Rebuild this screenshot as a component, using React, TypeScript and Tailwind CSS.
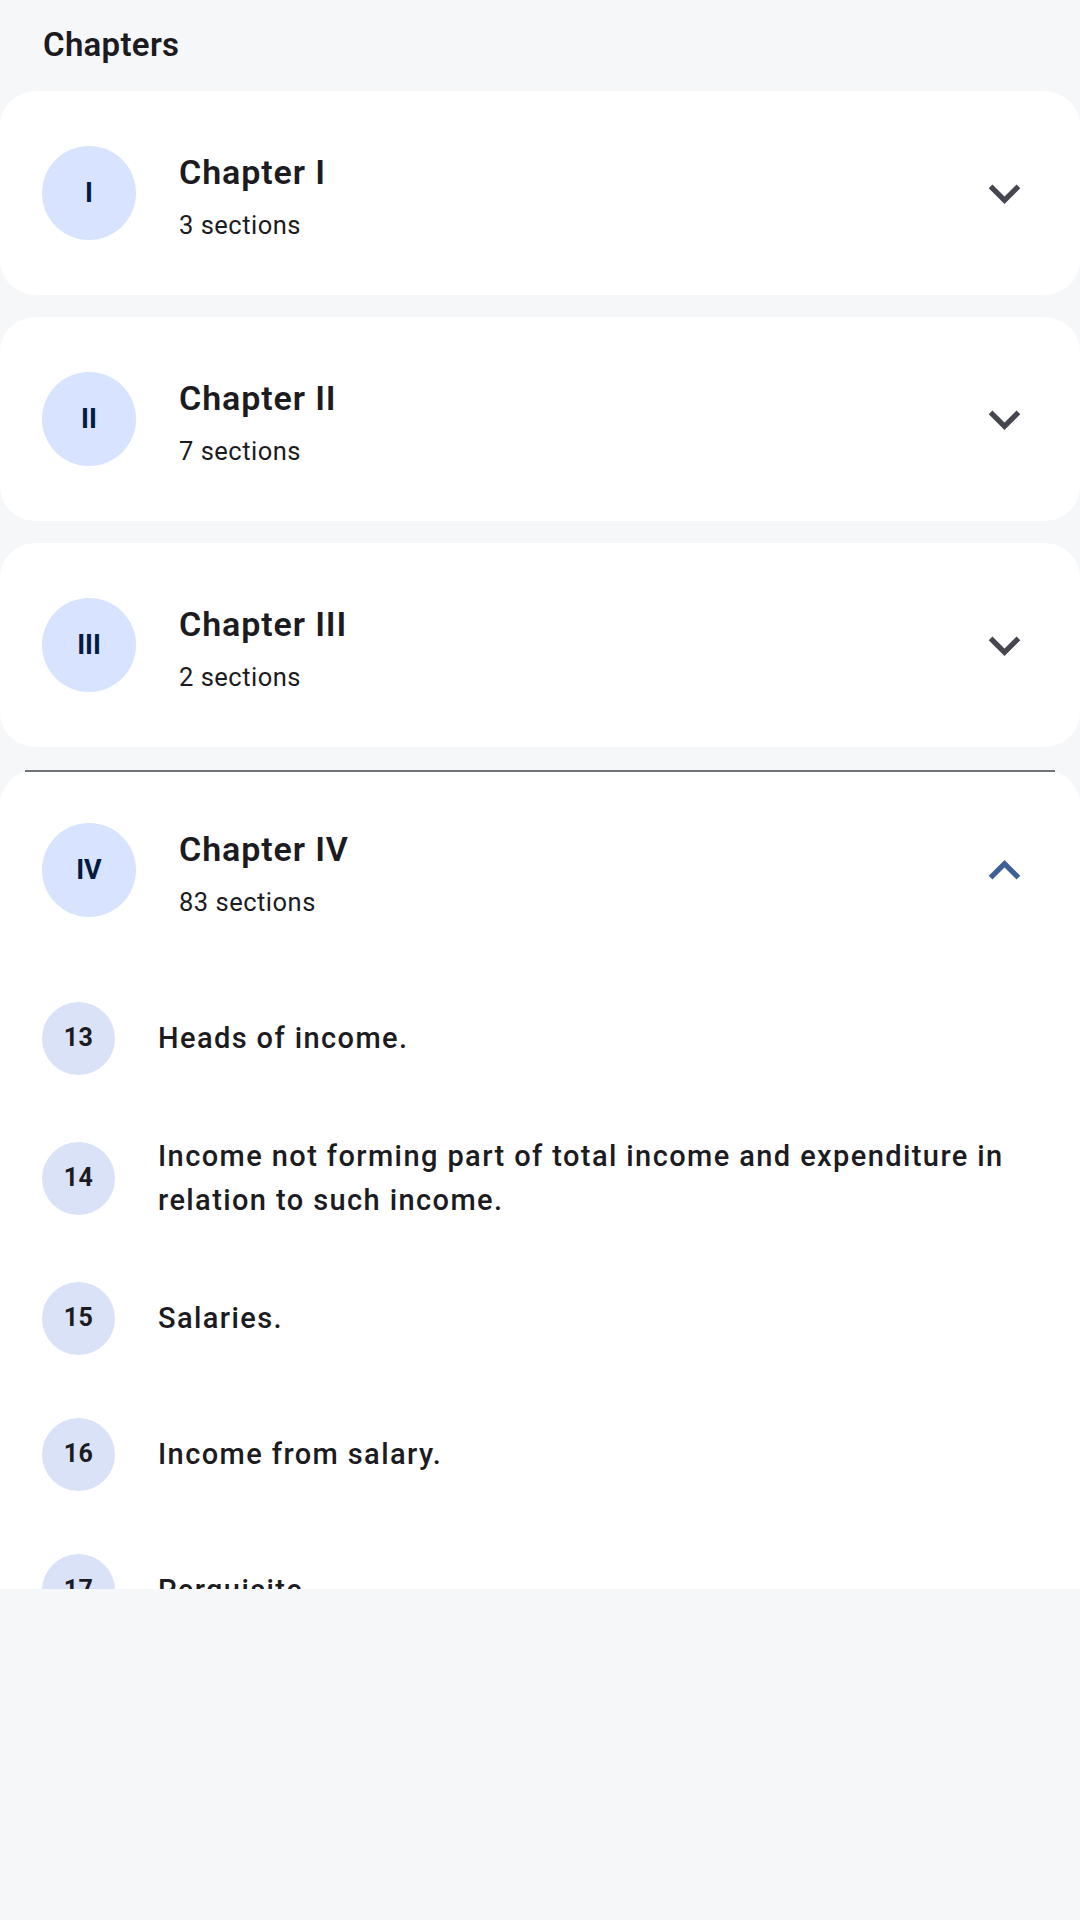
import React from 'react'

const chapters = [
  { num: 'I', title: 'Chapter I', count: 3 },
  { num: 'II', title: 'Chapter II', count: 7 },
  { num: 'III', title: 'Chapter III', count: 2 },
]

const sections = [
  { num: 13, title: 'Heads of income.' },
  { num: 14, title: 'Income not forming part of total income and expenditure in relation to such income.' },
  { num: 15, title: 'Salaries.' },
  { num: 16, title: 'Income from salary.' },
  { num: 17, title: 'Perquisite.' },
  { num: 18, title: 'Deductions from salaries.' },
]

function Chevron({ up }: { up?: boolean }) {
  return (
    <svg viewBox="0 0 24 24" className="w-[63px] h-[63px] shrink-0" fill={up ? '#3f5f98' : '#45464f'}>
      {up ? (
        <path d="M12 8l-6 6 1.41 1.41L12 10.83l4.59 4.58L18 14z" />
      ) : (
        <path d="M16.59 8.59L12 13.17 7.41 8.59 6 10l6 6 6-6z" />
      )}
    </svg>
  )
}

function ChapterHeader({ num, title, count, open }: { num: string; title: string; count: number; open?: boolean }) {
  return (
    <div className={`flex items-center pl-[42px] pr-[44px] ${open ? 'h-[200px]' : 'h-[204px]'}`}>
      <div className="w-[94px] h-[94px] rounded-full bg-[#d7e3ff] flex items-center justify-center text-[#001b3e] text-[27px] font-bold shrink-0">
        {num}
      </div>
      <div className="ml-[43px] flex-1 flex flex-col pt-[6px]">
        <div className="text-[34px] font-semibold text-[#1c1b1f] leading-[44px] tracking-[0.9px]">{title}</div>
        <div className="text-[25.5px] text-[#1c1b1f] leading-[36px] mt-[13px] tracking-[0.5px]">{count} sections</div>
      </div>
      <Chevron up={open} />
    </div>
  )
}

export default function App() {
  return (
    <div className="min-h-[1920px] bg-[#f6f7f9]" style={{ fontFamily: 'Roboto, "Noto Sans", sans-serif' }}>
      <div className="h-[91px] flex items-center pl-[43px] pb-[2px]">
        <h1 className="text-[33px] font-semibold text-[#1c1b1f] tracking-[0.3px]">Chapters</h1>
      </div>
      <div className="h-[1498px] overflow-hidden flex flex-col gap-[22px]">
        {chapters.map((c) => (
          <div key={c.num} className="bg-white rounded-[35px] shrink-0">
            <ChapterHeader {...c} />
          </div>
        ))}
        <div className="relative bg-white rounded-t-[35px] shrink-0 mt-[1px]">
          <div className="absolute top-0 left-[25px] right-[25px] h-[2px] bg-[#72727a]" />
          <ChapterHeader num="IV" title="Chapter IV" count={83} open />
          <div className="flex flex-col">
            {sections.map((s) => (
              <div key={s.num} className="flex items-center min-h-[136px] py-[28px] pl-[42px] pr-[40px]">
                <div className="w-[73px] h-[73px] rounded-full bg-[#dae2f8] flex items-center justify-center text-[25px] font-bold text-[#1c1b1f] shrink-0 tracking-[0.5px]">
                  {s.num}
                </div>
                <div className="ml-[43px] text-[29px] font-medium text-[#1c1b1f] leading-[44px] tracking-[1.4px]">
                  {s.title}
                </div>
              </div>
            ))}
          </div>
        </div>
      </div>
    </div>
  )
}
